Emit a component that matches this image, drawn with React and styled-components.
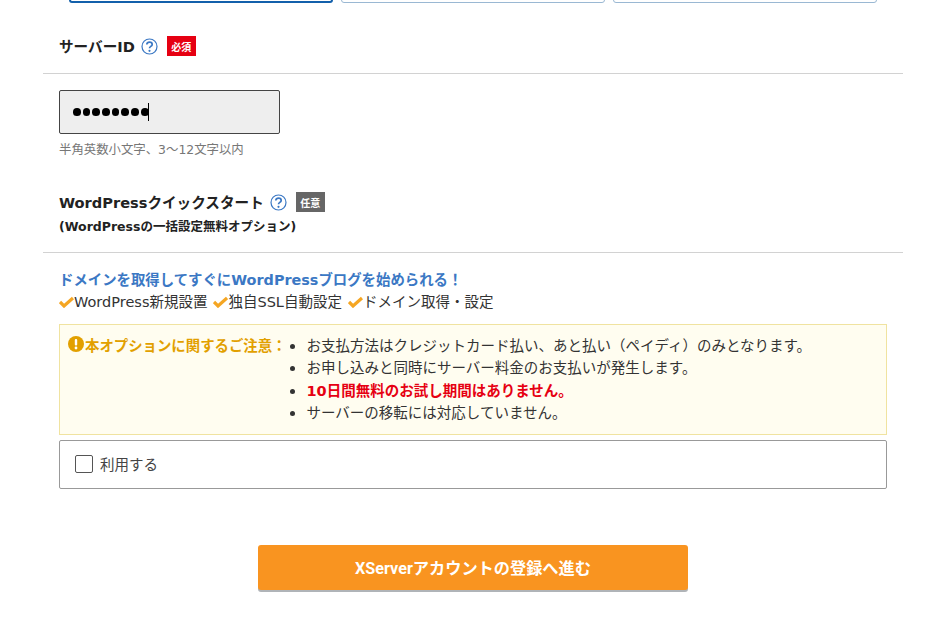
import React from 'react'
import styled, { createGlobalStyle } from 'styled-components'

const Global = createGlobalStyle`
  html {
    overflow: hidden;
  }
  body {
    margin: 0;
    background: #fff;
    font-family: "DejaVu Sans", "Noto Sans CJK JP", sans-serif;
    color: #333;
  }
`

const Page = styled.div`
  width: 860px;
  margin: -37px 0 0 43px;
  padding-bottom: 41px;
`

const Tabs = styled.div`
  display: flex;
  gap: 8px;
  padding-left: 26px;
`

const Tab = styled.div`
  width: 264px;
  height: 40px;
  box-sizing: border-box;
  background: #fff;
  border: ${p => (p.$active ? '2px solid #1360ab' : '1px solid #9ab8d3')};
  border-radius: 3px;
`

const Heading = styled.div`
  display: flex;
  align-items: center;
  height: 30px;
  padding-left: 16px;
  margin-top: ${p => p.$top}px;
`

const Title = styled.span`
  margin-top: -2px;
  font-size: 14.6px;
  font-weight: 700;
  color: #222;
`

const Help = styled.svg`
  width: 17px;
  height: 17px;
  margin: 0 9px 0 6px;
  flex: none;
`

const Badge = styled.span`
  display: flex;
  align-items: center;
  justify-content: center;
  width: 29px;
  height: 20px;
  background: ${p => (p.$required ? '#e60012' : '#666')};
  color: #fff;
  font-size: 10px;
  font-weight: 700;
`

const SubTitle = styled.div`
  padding-left: 16px;
  margin-top: 1px;
  font-size: 12.5px;
  font-weight: 700;
  line-height: 18px;
  color: #222;
`

const Divider = styled.hr`
  height: 1px;
  margin: ${p => p.$top}px 0 0;
  border: 0;
  background: #d2d2d2;
`

const Body = styled.div`
  padding: 0 16px;
`

const PasswordBox = styled.div`
  display: flex;
  align-items: center;
  box-sizing: border-box;
  width: 221px;
  height: 44px;
  margin-top: 16px;
  padding-left: 13px;
  background: #eee;
  border: 1px solid #444;
  border-radius: 2px;
`

const Dots = styled.span`
  display: flex;
  gap: 2px;
`

const Dot = styled.i`
  width: 7.7px;
  height: 7.7px;
  border-radius: 50%;
  background: #000;
`

const Caret = styled.i`
  width: 1px;
  height: 18px;
  margin-left: -1px;
  background: #000;
`

const Hint = styled.div`
  margin-top: 7px;
  font-size: 12.4px;
  line-height: 18px;
  color: #777;
`

const Lead = styled.div`
  margin-top: 17px;
  font-size: 14.4px;
  font-weight: 700;
  line-height: 20px;
  color: #3b78c4;
`

const Checks = styled.div`
  display: flex;
  gap: 6px;
  margin-top: 2px;
  font-size: 14.5px;
  line-height: 20px;
  color: #333;
`

const CheckItem = styled.span`
  display: flex;
  align-items: center;
`

const Tick = styled.svg`
  width: 15px;
  height: 12px;
  flex: none;
`

const Notice = styled.div`
  display: flex;
  box-sizing: border-box;
  height: 111px;
  margin-top: 12px;
  padding: 10px 8px;
  background: #fffdf0;
  border: 1px solid #f0e3a0;
`

const NoticeLabel = styled.div`
  display: flex;
  align-items: center;
  align-self: flex-start;
  height: 18px;
  flex: none;
  font-size: 14.4px;
  font-weight: 700;
  color: #e2a000;
`

const Alert = styled.svg`
  width: 16px;
  height: 16px;
  margin-right: 1px;
  flex: none;
`

const NoticeList = styled.ul`
  margin: 0;
  padding: 0 0 0 4px;
  list-style: none;
  font-size: 14.5px;
  line-height: 22.4px;
  color: #333;
`

const NoticeItem = styled.li`
  display: flex;
  align-items: center;
  font-weight: ${p => (p.$red ? 700 : 400)};
  color: ${p => (p.$red ? '#e60012' : 'inherit')};

  &::before {
    content: "";
    flex: none;
    width: 5px;
    height: 5px;
    margin-right: 11px;
    border-radius: 50%;
    background: #333;
  }
`

const OptionBox = styled.label`
  display: flex;
  align-items: center;
  box-sizing: border-box;
  height: 49px;
  margin-top: 5px;
  padding: 0 0 1px 15px;
  background: #fff;
  border: 1px solid #999;
  border-radius: 2px;
  font-size: 14.5px;
  color: #444;
`

const OptionText = styled.span`
  margin-top: -2px;
`

const Square = styled.span`
  width: 16px;
  height: 16px;
  margin-right: 7px;
  background: #fff;
  border: 1px solid #555;
  border-radius: 2px;
`

const Actions = styled.div`
  display: flex;
  justify-content: center;
  margin-top: 56px;
`

const Submit = styled.button`
  width: 430px;
  height: 45px;
  padding: 0 0 2px;
  background: #f99420;
  border: 0;
  border-radius: 3px;
  box-shadow: 0 2px 0 #b0b4b8;
  color: #fff;
  font-family: Roboto, "Noto Sans CJK JP", sans-serif;
  font-size: 16.2px;
  font-weight: 700;
`

const HelpIcon = () => (
  <Help viewBox="0 0 17 17">
    <circle cx="8.5" cy="8.5" r="7.5" fill="none" stroke="#3b78c4" strokeWidth="1.2" />
    <path d="M5.8 6.6c0-1.6 1.2-2.5 2.7-2.5s2.7.9 2.7 2.3c0 2-2.7 1.9-2.7 3.8" fill="none" stroke="#3b78c4" strokeWidth="1.7" />
    <circle cx="8.5" cy="12.8" r="1.1" fill="#3b78c4" />
  </Help>
)

const TickIcon = () => (
  <Tick viewBox="0 0 15 12">
    <path d="M1 6l4 4 9-8" fill="none" stroke="#f5a623" strokeWidth="3.2" />
  </Tick>
)

const App = () => (
  <Page>
    <Global />
    <Tabs>
      <Tab $active />
      <Tab />
      <Tab />
    </Tabs>

    <Heading $top={28}>
      <Title>サーバーID</Title>
      <HelpIcon />
      <Badge $required>必須</Badge>
    </Heading>
    <Divider $top={12} />

    <Body>
      <PasswordBox>
        <Dots>
          {Array.from({ length: 8 }).map((_, i) => <Dot key={i} />)}
        </Dots>
        <Caret />
      </PasswordBox>
      <Hint>半角英数小文字、3～12文字以内</Hint>
    </Body>

    <Heading $top={28}>
      <Title>WordPressクイックスタート</Title>
      <HelpIcon />
      <Badge>任意</Badge>
    </Heading>
    <SubTitle>(WordPressの一括設定無料オプション)</SubTitle>
    <Divider $top={16} />

    <Body>
      <Lead>ドメインを取得してすぐにWordPressブログを始められる！</Lead>
      <Checks>
        <CheckItem><TickIcon />WordPress新規設置</CheckItem>
        <CheckItem><TickIcon />独自SSL自動設定</CheckItem>
        <CheckItem><TickIcon />ドメイン取得・設定</CheckItem>
      </Checks>

      <Notice>
        <NoticeLabel>
          <Alert viewBox="0 0 16 16">
            <circle cx="8" cy="8" r="8" fill="#e2a000" />
            <rect x="6.8" y="3" width="2.4" height="6.5" rx="1" fill="#fff" />
            <circle cx="8" cy="12" r="1.4" fill="#fff" />
          </Alert>
          本オプションに関するご注意：
        </NoticeLabel>
        <NoticeList>
          <NoticeItem>お支払方法はクレジットカード払い、あと払い（ペイディ）のみとなります。</NoticeItem>
          <NoticeItem>お申し込みと同時にサーバー料金のお支払いが発生します。</NoticeItem>
          <NoticeItem $red>10日間無料のお試し期間はありません。</NoticeItem>
          <NoticeItem>サーバーの移転には対応していません。</NoticeItem>
        </NoticeList>
      </Notice>

      <OptionBox>
        <Square />
        <OptionText>利用する</OptionText>
      </OptionBox>

      <Actions>
        <Submit>XServerアカウントの登録へ進む</Submit>
      </Actions>
    </Body>
  </Page>
)

export default App
